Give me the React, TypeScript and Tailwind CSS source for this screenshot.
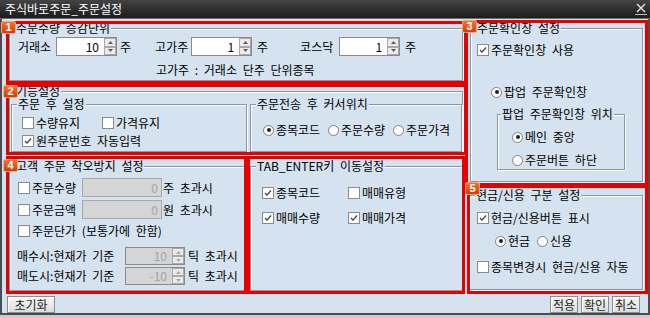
import React from "react";

const FONT: React.CSSProperties = {
  fontFamily: '"Noto Sans CJK KR", "Noto Sans", sans-serif',
};

function Badge({ n, className }: { n: string; className: string }) {
  return (
    <div
      className={`absolute z-20 w-[15px] h-[13px] rounded-[2px] border border-[#f6a77f] bg-gradient-to-b from-[#f4702e] to-[#d43c04] text-white text-[11px] font-bold leading-[11px] flex items-center justify-center [word-spacing:0] ${className}`}
      style={{ fontFamily: '"Liberation Sans", Arial, sans-serif' }}
    >
      {n}
    </div>
  );
}

function Box({
  className,
  children,
  badge,
  badgeClass = "",
}: {
  className: string;
  children: React.ReactNode;
  badge?: string;
  badgeClass?: string;
}) {
  return (
    <div className={`relative shrink-0 ${className}`}>
      {children}
      <div className="absolute inset-0 border-[3px] border-[#e60000] z-10 pointer-events-none" />
      {badge && <Badge n={badge} className={badgeClass} />}
    </div>
  );
}

function Group({
  title,
  className,
  children,
  legendClass = "ml-[5px]",
}: {
  title: string;
  className: string;
  children?: React.ReactNode;
  legendClass?: string;
}) {
  return (
    <fieldset
      className={`min-w-0 shrink-0 border border-[#8a97a3] shadow-[inset_1px_1px_0_#ffffff,1px_1px_0_#ffffff] ${className}`}
    >
      <legend
        className={`px-[1px] h-[12px] leading-[12px] whitespace-nowrap bg-[#d4e3ef] ${legendClass}`}
      >
        {title}
      </legend>
      {children}
    </fieldset>
  );
}

function Check({ on }: { on?: boolean }) {
  return (
    <span className="w-[12px] h-[12px] shrink-0 bg-white border border-[#8a8a8a] flex items-center justify-center">
      {on && (
        <svg width="8" height="8" viewBox="0 0 8 8">
          <path d="M1 4 L3 6.2 L7 1.5" stroke="#3a3a3a" strokeWidth="1.2" fill="none" />
        </svg>
      )}
    </span>
  );
}

function Radio({ on }: { on?: boolean }) {
  return (
    <span className="w-[11px] h-[11px] shrink-0 rounded-full bg-white border border-[#7d7d7d] flex items-center justify-center">
      {on && <span className="w-[4px] h-[4px] rounded-full bg-[#222222]" />}
    </span>
  );
}

function SpinBtn({ up, disabled }: { up?: boolean; disabled?: boolean }) {
  const c = disabled ? "#a8a8a8" : "#5c5c5c";
  return (
    <div className="flex-1 flex items-center justify-center bg-[#ebebeb] border border-[#a9a9a9]">
      <svg width="5" height="3" viewBox="0 0 5 3">
        {up ? <path d="M0 3 L2.5 0 L5 3 Z" fill={c} /> : <path d="M0 0 L2.5 3 L5 0 Z" fill={c} />}
      </svg>
    </div>
  );
}

function Spin({
  value,
  className,
  disabled,
}: {
  value: string;
  className: string;
  disabled?: boolean;
}) {
  return (
    <div
      className={`flex shrink-0 border border-[#8a8a8a] ${disabled ? "bg-[#d5d5d5]" : "bg-white"} ${className}`}
    >
      <div
        className={`flex-1 flex items-center justify-end pr-[5px] ${disabled ? "text-[#a3a3a3]" : "text-black"}`}
      >
        {value}
      </div>
      <div className="w-[12px] flex flex-col">
        <SpinBtn up disabled={disabled} />
        <SpinBtn disabled={disabled} />
      </div>
    </div>
  );
}

function DisInput({ className }: { className: string }) {
  return (
    <div
      className={`shrink-0 flex items-center justify-end pr-[3px] bg-[#d5d5d5] border border-[#a8a8a8] text-[#a3a3a3] ${className}`}
    >
      0
    </div>
  );
}

function Btn({ children, className }: { children: React.ReactNode; className: string }) {
  return (
    <div
      className={`h-[17px] flex items-center justify-center border border-[#8c8c8c] bg-gradient-to-b from-[#f8f8f8] to-[#dcdcdc] shadow-[inset_1px_1px_0_#ffffff] text-[#222222] ${className}`}
    >
      {children}
    </div>
  );
}

export default function App() {
  return (
    <div
      className="w-[650px] h-[318px] flex flex-col bg-[#d4e3ef] text-[12px] leading-[14px] text-black overflow-hidden [word-spacing:3px]"
      style={FONT}
    >
      {/* title bar */}
      <div className="h-[19px] shrink-0 flex items-center justify-between bg-gradient-to-b from-[#444444] to-[#1c1c1c] border-b border-[#707070] pl-[5px] pr-[3px]">
        <span className="text-white whitespace-nowrap [word-spacing:0]">주식바로주문_주문설정</span>
        <svg width="12" height="12" viewBox="0 0 12 12">
          <path d="M2 1 L10 9 M10 1 L2 9" stroke="#e6e6e6" strokeWidth="1.4" />
          <path d="M0 11.5 L12 11.5" stroke="#bdbdbd" strokeWidth="1" />
        </svg>
      </div>

      {/* body */}
      <div className="flex-1 flex flex-col border-x-2 border-b-2 border-[#474d53]">
        <div className="flex pl-[4px]">
          {/* left column */}
          <div className="w-[461px] pt-[2px] flex flex-col shrink-0">
            {/* box 1 */}
            <Box className="h-[63px]" badge="1" badgeClass="left-[-5px] top-0">
              <Group title="주문수량 증감단위" className="mt-[1px] ml-[3px] w-[454px] h-[59px]">
                <div className="flex items-center h-[19px] mt-[3px] pl-[8px] whitespace-nowrap">
                  <span className="w-[36px] shrink-0">거래소</span>
                  <Spin value="10" className="ml-[2px] w-[61px] h-[19px]" />
                  <span className="ml-[3px]">주</span>
                  <span className="ml-[24px] w-[36px] shrink-0">고가주</span>
                  <Spin value="1" className="ml-[0px] w-[61px] h-[19px]" />
                  <span className="ml-[5px]">주</span>
                  <span className="ml-[32px] w-[36px] shrink-0">코스닥</span>
                  <Spin value="1" className="ml-[3px] w-[61px] h-[19px]" />
                  <span className="ml-[5px]">주</span>
                </div>
                <div className="mt-[7px] pl-[146px] whitespace-nowrap">고가주 : 거래소 단주 단위종목</div>
              </Group>
            </Box>

            {/* box 2 */}
            <Box className="h-[71px]" badge="2" badgeClass="left-[-3px] top-[1px]">
              <Group title="기능설정" className="mt-[1px] ml-[3px] w-[454px] h-[70px]">
                <div className="flex mt-[1px] ml-[1px] gap-[3px]">
                  <Group title="주문 후 설정" className="w-[236px] h-[54px]">
                    <div className="flex items-center h-[14px] mt-[6px] pl-[10px] whitespace-nowrap">
                      <Check />
                      <span className="ml-[2px] w-[48px] shrink-0">수량유지</span>
                      <span className="ml-[18px]">
                        <Check />
                      </span>
                      <span className="ml-[2px]">가격유지</span>
                    </div>
                    <div className="flex items-center h-[14px] mt-[4px] pl-[10px] whitespace-nowrap">
                      <Check on />
                      <span className="ml-[2px]">원주문번호 자동입력</span>
                    </div>
                  </Group>
                  <Group title="주문전송 후 커서위치" className="w-[212px] h-[54px]">
                    <div className="flex items-center h-[14px] mt-[13px] pl-[12px] whitespace-nowrap">
                      <Radio on />
                      <span className="ml-[2px] w-[48px] shrink-0">종목코드</span>
                      <span className="ml-[4px]">
                        <Radio />
                      </span>
                      <span className="ml-[2px] w-[48px] shrink-0">주문수량</span>
                      <span className="ml-[4px]">
                        <Radio />
                      </span>
                      <span className="ml-[2px]">주문가격</span>
                    </div>
                  </Group>
                </div>
              </Group>
            </Box>

            {/* bottom row */}
            <div className="flex mt-[1px] h-[138px]">
              <Box className="w-[241px] h-full" badge="4" badgeClass="left-[-3px] top-[3px]">
                <Group title="고객 주문 착오방지 설정" className="mt-[4px] ml-[3px] w-[236px] h-[131px]">
                  <div className="flex items-center h-[19px] mt-[6px] pl-[8px] whitespace-nowrap">
                    <Check />
                    <span className="ml-[2px] w-[48px] shrink-0">주문수량</span>
                    <DisInput className="ml-[2px] w-[80px] h-[19px]" />
                    <span className="ml-[1px]">주 초과시</span>
                  </div>
                  <div className="flex items-center h-[19px] mt-[3px] pl-[8px] whitespace-nowrap">
                    <Check />
                    <span className="ml-[2px] w-[48px] shrink-0">주문금액</span>
                    <DisInput className="ml-[2px] w-[80px] h-[19px]" />
                    <span className="ml-[1px]">원 초과시</span>
                  </div>
                  <div className="flex items-center h-[14px] mt-[5px] pl-[8px] whitespace-nowrap">
                    <Check />
                    <span className="ml-[2px]">주문단가 (보통가에 한함)</span>
                  </div>
                  <div className="flex items-center h-[18px] mt-[9px] pl-[7px] whitespace-nowrap">
                    <span className="w-[108px] shrink-0">매수시:현재가 기준</span>
                    <Spin value="10" disabled className="w-[60px] h-[18px]" />
                    <span className="ml-[3px]">틱 초과시</span>
                  </div>
                  <div className="flex items-center h-[18px] mt-[2px] pl-[7px] whitespace-nowrap">
                    <span className="w-[108px] shrink-0">매도시:현재가 기준</span>
                    <Spin value="-10" disabled className="w-[60px] h-[18px]" />
                    <span className="ml-[3px]">틱 초과시</span>
                  </div>
                </Group>
              </Box>
              <Box className="w-[218px] h-full">
                <Group title="TAB_ENTER키 이동설정" className="mt-[4px] ml-[3px] w-[213px] h-[131px]">
                  <div className="flex items-center h-[14px] mt-[14px] pl-[11px] whitespace-nowrap">
                    <span className="w-[86px] shrink-0 flex items-center">
                      <Check on />
                      <span className="ml-[2px]">종목코드</span>
                    </span>
                    <span className="flex items-center">
                      <Check />
                      <span className="ml-[2px]">매매유형</span>
                    </span>
                  </div>
                  <div className="flex items-center h-[14px] mt-[11px] pl-[11px] whitespace-nowrap">
                    <span className="w-[86px] shrink-0 flex items-center">
                      <Check on />
                      <span className="ml-[2px]">매매수량</span>
                    </span>
                    <span className="flex items-center">
                      <Check on />
                      <span className="ml-[2px]">매매가격</span>
                    </span>
                  </div>
                </Group>
              </Box>
            </div>
          </div>

          {/* right column */}
          <div className="w-[183px] -ml-[2px] pt-[1px] flex flex-col shrink-0">
            <Box className="h-[166px]" badge="3" badgeClass="left-[-3px] top-0">
              <Group title="주문확인창 설정" className="mt-[2px] ml-[5px] w-[173px] h-[160px]">
                <div className="flex items-center h-[14px] mt-[9px] pl-[6px] whitespace-nowrap">
                  <Check on />
                  <span className="ml-[2px]">주문확인창 사용</span>
                </div>
                <div className="flex items-center h-[14px] mt-[28px] pl-[20px] whitespace-nowrap">
                  <Radio on />
                  <span className="ml-[2px]">팝업 주문확인창</span>
                </div>
                <Group
                  title="팝업 주문확인창 위치"
                  className="mt-[9px] ml-[26px] w-[128px] h-[62px]"
                  legendClass="ml-[3px]"
                >
                  <div className="flex items-center h-[14px] mt-[10px] pl-[14px] whitespace-nowrap">
                    <Radio on />
                    <span className="ml-[2px]">메인 중앙</span>
                  </div>
                  <div className="flex items-center h-[14px] mt-[9px] pl-[14px] whitespace-nowrap">
                    <Radio />
                    <span className="ml-[2px]">주문버튼 하단</span>
                  </div>
                </Group>
              </Group>
            </Box>
            <Box className="h-[109px] -mt-[1px] ml-[2px]" badge="5" badgeClass="left-[-2px] top-[-3px]">
              <Group title="현금/신용 구분 설정" className="mt-[4px] ml-[2px] w-[174px] h-[101px]">
                <div className="flex items-center h-[14px] mt-[10px] pl-[7px] whitespace-nowrap">
                  <Check on />
                  <span className="ml-[2px]">현금/신용버튼 표시</span>
                </div>
                <div className="flex items-center h-[14px] mt-[9px] pl-[25px] whitespace-nowrap">
                  <Radio on />
                  <span className="ml-[2px] w-[24px] shrink-0">현금</span>
                  <span className="ml-[5px]">
                    <Radio />
                  </span>
                  <span className="ml-[2px]">신용</span>
                </div>
                <div className="flex items-center h-[14px] mt-[12px] pl-[7px] whitespace-nowrap">
                  <Check />
                  <span className="ml-[2px]">종목변경시 현금/신용 자동</span>
                </div>
              </Group>
            </Box>
          </div>
        </div>

        {/* bottom bar */}
        <div className="flex-1 flex items-start pt-[2px] pl-[5px] pr-[8px] whitespace-nowrap">
          <Btn className="w-[48px]">초기화</Btn>
          <div className="ml-auto flex gap-[3px]">
            <Btn className="w-[28px]">적용</Btn>
            <Btn className="w-[28px]">확인</Btn>
            <Btn className="w-[28px]">취소</Btn>
          </div>
        </div>
      </div>
      <div className="h-[3px] shrink-0 bg-[#c9ccd0]" />
    </div>
  );
}
